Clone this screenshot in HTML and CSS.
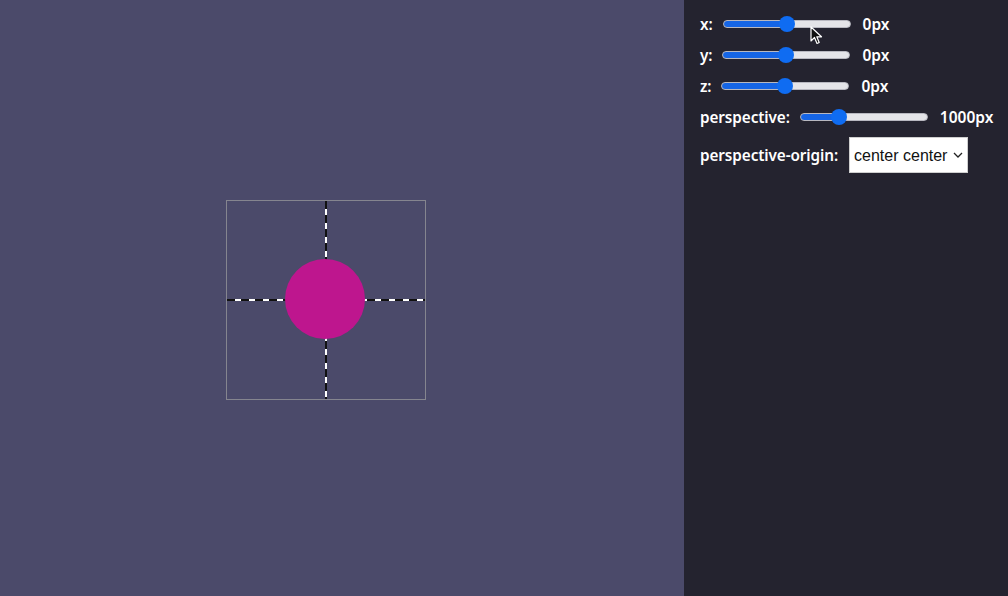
FILE: index.html
```html
<!DOCTYPE html>
<html>
<head>
<meta charset="utf-8">
<link rel="stylesheet" href="styles.css">
</head>
<body>
<div class="app">
  <main class="stage">
    <div class="box">
      <div class="axis axis-v"></div>
      <div class="axis axis-h"></div>
      <div class="ball"></div>
    </div>
  </main>
  <aside class="panel">
    <div class="row">
      <label class="lbl">x:</label>
      <div class="slider-wrap">
        <input class="range range-mid" type="range" min="-100" max="100" value="0">
        <svg class="cursor" width="14" height="20" viewBox="0 0 14 20"><path d="M1 1 L1 15 L4.5 11.5 L7 17.5 L9.2 16.5 L6.8 10.8 L11.5 10.8 Z" fill="#111" stroke="#fff" stroke-width="1.2" stroke-linejoin="round"/></svg>
      </div>
      <span class="val">0px</span>
    </div>
    <div class="row">
      <label class="lbl">y:</label>
      <input class="range range-mid" type="range" min="-100" max="100" value="0">
      <span class="val">0px</span>
    </div>
    <div class="row">
      <label class="lbl">z:</label>
      <input class="range range-mid" type="range" min="-100" max="100" value="0">
      <span class="val">0px</span>
    </div>
    <div class="row">
      <label class="lbl">perspective:</label>
      <input class="range range-low" type="range" min="0" max="3700" value="1000">
      <span class="val">1000px</span>
    </div>
    <div class="row row-select">
      <label class="lbl">perspective-origin:</label>
      <div class="select-wrap">
        <select class="select">
          <option>center center</option>
        </select>
        <svg class="chev" width="10" height="6" viewBox="0 0 10 6"><path d="M1 1 L5 5 L9 1" fill="none" stroke="#222" stroke-width="1.3"/></svg>
      </div>
    </div>
  </aside>
</div>
</body>
</html>
```

FILE: styles.css
```css
* { box-sizing: border-box; }
html, body { margin: 0; padding: 0; }
body {
  width: 1008px;
  height: 596px;
  overflow: hidden;
  font-family: "Noto Sans", "Open Sans", sans-serif;
}
.app {
  display: flex;
  height: 596px;
}
.stage {
  width: 684px;
  background: #4b4a6a;
  padding: 200px 0 0 226px;
}
.box {
  position: relative;
  width: 200px;
  height: 200px;
  border: 1px solid #85858f;
}
.axis {
  position: absolute;
}
.axis-v {
  left: 98px;
  top: 0;
  width: 2px;
  height: 198px;
  background: repeating-linear-gradient(to bottom, #111 0 8px, #fff 8px 14px);
}
.axis-h {
  top: 98px;
  left: 0;
  height: 2px;
  width: 198px;
  background: repeating-linear-gradient(to right, #111 0 8px, #fff 8px 14px);
}
.ball {
  position: absolute;
  left: 58px;
  top: 58px;
  width: 80px;
  height: 80px;
  border-radius: 50%;
  background: #be168e;
}
.panel {
  flex: 1;
  background: #24232f;
  padding: 8px 0 0 16px;
  color: #fff;
}
.row {
  display: flex;
  align-items: center;
  height: 31px;
  gap: 10px;
}
.row-select {
  height: 46px;
  gap: 11px;
}
.lbl {
  font-weight: 600;
  font-size: 15.3px;
  letter-spacing: -0.1px;
}
.val {
  font-weight: 600;
  font-size: 15.5px;
  margin-left: 2px;
}
.slider-wrap {
  position: relative;
  display: flex;
}
.cursor {
  position: absolute;
  left: 87px;
  top: 6px;
}
.range {
  -webkit-appearance: none;
  appearance: none;
  width: 128px;
  height: 8px;
  margin: 0;
  border-radius: 4px;
  border: 1px solid #b8b8c0;
  outline: none;
}
.range-mid {
  background: linear-gradient(to right, #1565e6 0 50%, #e4e4e8 50% 100%);
}
.range-low {
  background: linear-gradient(to right, #1565e6 0 27%, #e4e4e8 27% 100%);
}
.range::-webkit-slider-thumb {
  -webkit-appearance: none;
  appearance: none;
  width: 16px;
  height: 16px;
  border-radius: 50%;
  background: #0f6cf2;
  border: none;
}
.select-wrap {
  position: relative;
  display: flex;
}
.select {
  -webkit-appearance: none;
  appearance: none;
  width: 119px;
  height: 36px;
  background: #fff;
  border: 1px solid #cfcfcf;
  border-radius: 0;
  color: #111;
  font-family: "Liberation Sans", Arial, sans-serif;
  font-size: 16px;
  padding: 0 0 0 4px;
  margin: 0;
}
.chev {
  position: absolute;
  right: 5px;
  top: 15px;
  pointer-events: none;
}
```
